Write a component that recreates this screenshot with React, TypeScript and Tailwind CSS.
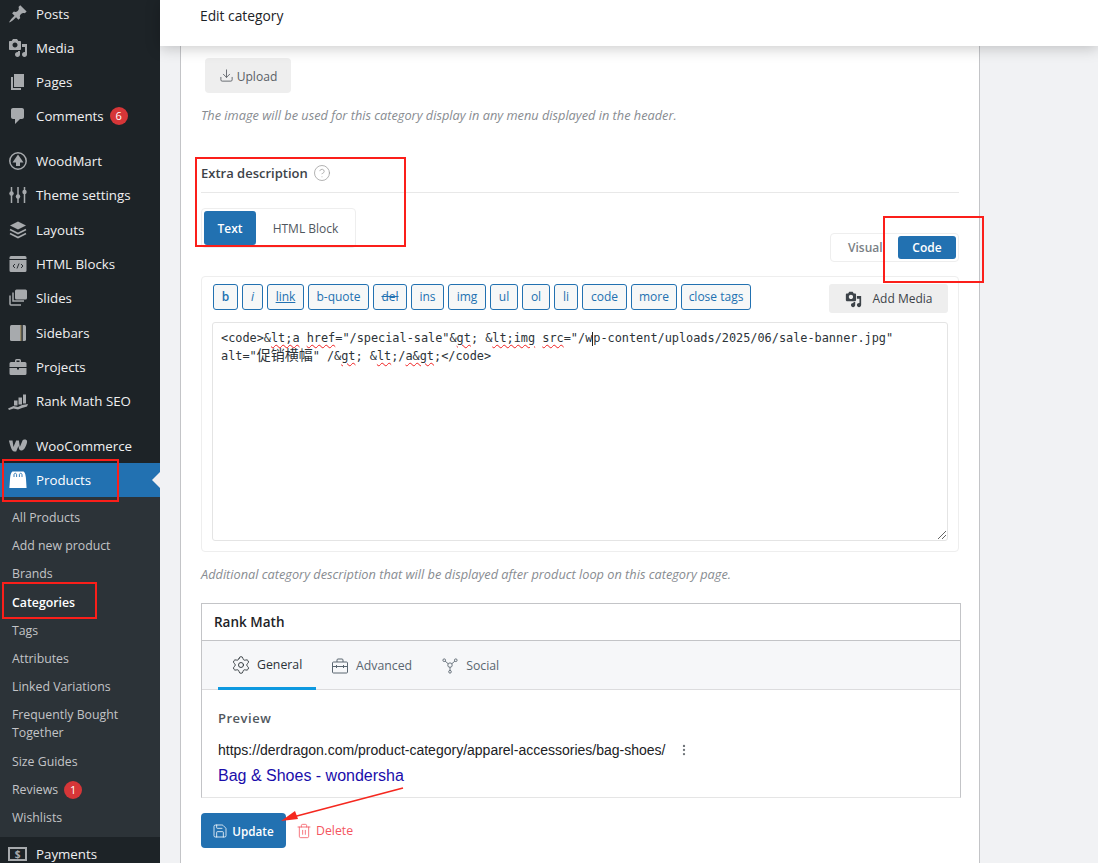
import React from "react";
import {
  CircleHelp,
  Download,
  EllipsisVertical,
  Save,
  Settings,
  Trash2,
} from "lucide-react";

const Dash = ({ d, className = "" }: { d: string; className?: string }) => (
  <svg viewBox="0 0 20 20" className={`h-5 w-5 fill-[#a7aaad] ${className}`}>
    <path d={d} />
  </svg>
);

const PostsIcon = () => (
  <Dash d="M10.44 3.02l1.82-1.82 6.36 6.35-1.83 1.82c-1.05-.68-2.48-.57-3.41.36l-.75.75c-.92.93-1.04 2.35-.35 3.41l-1.83 1.82-2.41-2.41-2.8 2.79c-.42.42-3.38 2.71-3.8 2.29s1.86-3.39 2.28-3.81l2.79-2.79L4.1 9.36l1.83-1.82c1.05.69 2.48.57 3.4-.36l.75-.75c.93-.92 1.05-2.35.36-3.41z" />
);
const mediaPath =
  "M13 11V4c0-.55-.45-1-1-1h-1.67L9 1H5L3.67 3H2c-.55 0-1 .45-1 1v7c0 .55.45 1 1 1h10c.55 0 1-.45 1-1zM7 4.5c1.38 0 2.5 1.12 2.5 2.5S8.38 9.5 7 9.5 4.5 8.38 4.5 7 5.62 4.5 7 4.5zM14 6h5v10.5c0 1.38-1.12 2.5-2.5 2.5S14 17.88 14 16.5s1.12-2.5 2.5-2.5c.17 0 .34.02.5.05V9h-3V6zm-4 8.05V13h2v3.5c0 1.38-1.12 2.5-2.5 2.5S7 17.88 7 16.5 8.12 14 9.5 14c.17 0 .34.02.5.05z";
const MediaIcon = () => <Dash d={mediaPath} />;
const PagesIcon = () => <Dash d="M6 15V2h10v13H6zm-1 1h8v2H3V5h2v11z" />;
const CommentsIcon = () => (
  <Dash d="M5 2h9c1.1 0 2 .9 2 2v7c0 1.1-.9 2-2 2h-2l-5 5v-5H5c-1.1 0-2-.9-2-2V4c0-1.1.9-2 2-2z" />
);
const WoodMartIcon = () => (
  <svg viewBox="0 0 20 20" className="h-5 w-5">
    <circle cx="10" cy="10" r="8.2" fill="none" stroke="#a7aaad" strokeWidth="1.5" />
    <path d="M10 3.5l5.500 8H12v3.500H8v-3.500H4.500z" fill="#a7aaad" />
  </svg>
);
const SlidersIcon = () => (
  <svg viewBox="0 0 20 20" className="h-5 w-5">
    <path d="M3.5 2v16M10 2v16M16.5 2v16" stroke="#a7aaad" strokeWidth="1.5" />
    <circle cx="3.5" cy="8.5" r="2.2" fill="#a7aaad" />
    <circle cx="10" cy="11.5" r="2.2" fill="#a7aaad" />
    <circle cx="16.5" cy="7" r="2.2" fill="#a7aaad" />
  </svg>
);
const LayersIcon = () => (
  <svg viewBox="0 0 20 20" className="h-5 w-5">
    <path d="M10 1.5l8 4-8 4-8-4z" fill="#a7aaad" />
    <path d="M2 9.5l8 4 8-4M2 13.5l8 4 8-4" fill="none" stroke="#a7aaad" strokeWidth="1.6" />
  </svg>
);
const HtmlIcon = () => (
  <svg viewBox="0 0 20 20" className="h-5 w-5">
    <path
      d="M3 2h14a1.5 1.5 0 0 1 1.5 1.5V5h-17V3.5A1.5 1.5 0 0 1 3 2zM1.500 6h17v10.500A1.500 1.500 0 0 1 17 18H3a1.500 1.500 0 0 1-1.500-1.500z"
      fill="#a7aaad"
    />
    <path d="M7 10l-2 2 2 2M13 10l2 2-2 2M11 9.500l-2 5" fill="none" stroke="#1d2327" strokeWidth="0.9" />
  </svg>
);
const SlidesIcon = () => (
  <svg viewBox="0 0 20 20" className="h-5 w-5">
    <rect x="7" y="1.500" width="12" height="10" rx="1.500" fill="#a7aaad" />
    <path d="M5 4.500v8.500h11M2 7.500v8.500a1 1 0 0 0 1 1h10" fill="none" stroke="#a7aaad" strokeWidth="1.500" />
  </svg>
);
const SidebarsIcon = () => (
  <svg viewBox="0 0 20 20" className="h-5 w-5">
    <rect x="2" y="2" width="16" height="16" rx="1.500" fill="#a7aaad" />
    <rect x="12.500" y="2" width="1" height="16" fill="#8a6f2e" />
    <rect x="13.500" y="2" width="1.200" height="16" fill="#1d2327" />
  </svg>
);
const ProjectsIcon = () => (
  <svg viewBox="0 0 20 20" className="h-5 w-5">
    <path
      d="M7 5V3.500A1.500 1.500 0 0 1 8.500 2h3A1.500 1.500 0 0 1 13 3.500V5h4a1.500 1.500 0 0 1 1.500 1.500V10h-17V6.500A1.500 1.500 0 0 1 3 5zm1.500 0h3V3.500h-3zM1.500 11H9v1.500h2V11h7.500v5.500A1.500 1.500 0 0 1 17 18H3a1.500 1.500 0 0 1-1.500-1.500z"
      fill="#a7aaad"
    />
  </svg>
);
const RankIcon = () => (
  <svg viewBox="0 0 20 20" className="h-5 w-5">
    <path
      d="M6 9.500h3.500v5H6zM10.500 6.500H14V13.500h-3.500zM15 3.500h3v9h-3zM0 17.500l5.500-2.500 4.500 1 4-2 6-1-1 2.500-5 1.500-4 1.500-4.500-1-4.500 1.500z"
      fill="#a7aaad"
    />
  </svg>
);
const WooIcon = () => (
  <svg viewBox="0 0 22 14" className="h-[14px] w-[20px]">
    <path
      d="M1 1h4l1 7 3-7h3l1 7 3-7c1-1.500 5-1.500 5 1 0 3-3 10-6 10-2 0-3-1-3.500-5L9 13H6.500C4 13 2 5 1 1z"
      fill="#a7aaad"
    />
  </svg>
);
const StoreIcon = () => (
  <svg viewBox="0 0 20 20" className="h-5 w-5">
    <path d="M5 1.500h10c1.500 0 2.500 2 3 7.500l.6 9H1.400L2 9c.5-5.500 1.500-7.500 3-7.500z" fill="#ffffff" />
    <path d="M6 7V4.800c0-2 2.600-2 2.600 0V7M11.400 7V4.800c0-2 2.600-2 2.600 0V7" fill="none" stroke="#2271b1" strokeWidth="0.9" />
  </svg>
);

const mainMenu = [
  { label: "Posts", icon: <PostsIcon /> },
  { label: "Media", icon: <MediaIcon /> },
  { label: "Pages", icon: <PagesIcon /> },
  { label: "Comments", icon: <CommentsIcon />, badge: "6" },
];
const themeMenu = [
  { label: "WoodMart", icon: <WoodMartIcon /> },
  { label: "Theme settings", icon: <SlidersIcon /> },
  { label: "Layouts", icon: <LayersIcon /> },
  { label: "HTML Blocks", icon: <HtmlIcon /> },
  { label: "Slides", icon: <SlidesIcon /> },
  { label: "Sidebars", icon: <SidebarsIcon /> },
  { label: "Projects", icon: <ProjectsIcon /> },
  { label: "Rank Math SEO", icon: <RankIcon /> },
];
const subMenu = [
  "All Products",
  "Add new product",
  "Brands",
  "Categories",
  "Tags",
  "Attributes",
  "Linked Variations",
  "Frequently Bought Together",
  "Size Guides",
  "Reviews",
  "Wishlists",
];
const quickTags = [
  { t: "b", w: "w-[25px] font-semibold" },
  { t: "i", w: "w-[21px] italic" },
  { t: "link", w: "w-[37px] underline" },
  { t: "b-quote", w: "w-[61px]" },
  { t: "del", w: "w-[34px] line-through" },
  { t: "ins", w: "w-[33px]" },
  { t: "img", w: "w-[38px]" },
  { t: "ul", w: "w-[28px]" },
  { t: "ol", w: "w-[28px]" },
  { t: "li", w: "w-[24px]" },
  { t: "code", w: "w-[45px]" },
  { t: "more", w: "w-[46px]" },
  { t: "close tags", w: "w-[70px]" },
];

const Badge = ({ n }: { n: string }) => (
  <span className="ml-[6px] flex h-[18px] w-[18px] items-center justify-center rounded-full bg-[#d63638] text-[11px] text-white">
    {n}
  </span>
);

const MenuItem = ({
  label,
  icon,
  badge,
  rowClass,
}: {
  label: string;
  icon: React.ReactNode;
  badge?: string;
  rowClass: string;
}) => (
  <div className={`flex items-center text-[#f0f0f1] ${rowClass}`}>
    <div className="flex w-[36px] justify-center pr-[1px]">{icon}</div>
    <span className="pt-[2px]">{label}</span>
    {badge && <Badge n={badge} />}
  </div>
);

const Sidebar = () => (
  <aside className="flex h-full w-[160px] shrink-0 flex-col overflow-hidden bg-[#1d2327] text-[13.3px]">
    <div className="-mt-[3px] shrink-0">
      {mainMenu.map((m) => (
        <MenuItem key={m.label} rowClass="h-[34px]" {...m} />
      ))}
    </div>
    <div className="mt-[11px] shrink-0">
      {themeMenu.map((m) => (
        <MenuItem key={m.label} rowClass="h-[34.3px]" {...m} />
      ))}
    </div>
    <div className="mt-[10.6px] flex h-[34px] shrink-0 items-center text-[#f0f0f1]">
      <div className="flex w-[36px] justify-center pr-[1px]">
        <WooIcon />
      </div>
      <span className="pt-[2px]">WooCommerce</span>
    </div>
    <div className="relative flex h-[34px] shrink-0 items-center bg-[#2271b1] text-white">
      <div className="flex w-[36px] justify-center pr-[1px]">
        <StoreIcon />
      </div>
      <span className="pt-[2px]">Products</span>
      <span className="absolute right-0 top-[9px] h-0 w-0 border-y-[8px] border-r-[8px] border-y-transparent border-r-[#f0f0f1]" />
    </div>
    <div className="shrink-0 bg-[#2c3338] pb-[5px] pt-[7px] text-[12.3px] leading-[18px] text-[#c3c4c7]">
      {subMenu.map((s) => (
        <div key={s} className={`flex items-center px-3 py-[5.1px] ${s === "Categories" ? "font-semibold text-white" : ""}`}>
          <span>{s}</span>
          {s === "Reviews" && <Badge n="1" />}
        </div>
      ))}
    </div>
    <div className="flex h-[34px] shrink-0 items-center text-[#f0f0f1]">
      <div className="flex w-[36px] justify-center pr-[1px]">
        <span className="flex h-[14px] w-[19px] items-center justify-center border-2 border-[#a7aaad] text-[10px] font-bold text-[#a7aaad]">
          $
        </span>
      </div>
      <span className="pt-[2px]">Payments</span>
    </div>
  </aside>
);

const Squiggle = ({ children }: { children: React.ReactNode }) => (
  <span className="underline decoration-[#f02020] decoration-wavy decoration-1 underline-offset-2">{children}</span>
);

const Editor = () => (
  <div className="mt-[14px] h-[276px] rounded border border-[#eeeeee] px-[10px] pt-[7px]">
    <div className="flex items-start">
      <div className="flex gap-[4px] pl-[1px]">
        {quickTags.map(({ t, w }) => (
          <button
            key={t}
            className={`h-[26px] rounded-[3px] border border-[#2271b1] bg-[#f6f7f7] text-[12px] text-[#2271b1] ${w}`}
          >
            {t}
          </button>
        ))}
      </div>
      <button className="ml-auto flex h-[29px] w-[119px] items-center justify-center gap-[11px] rounded-[3px] bg-[#eeeeee] pt-[1px] text-[12px] font-medium text-[#3d4349]">
        <svg viewBox="0 0 20 20" className="h-[17px] w-[17px] fill-[#3d4349]">
          <path d={mediaPath} />
        </svg>
        Add Media
      </button>
    </div>
    <div className="relative mt-[9px] h-[219px] rounded-[3px] border border-[#e4e4e4] px-2 py-[6px] font-['DejaVu_Sans_Mono','Noto_Sans_CJK_SC',monospace] text-[11.9px] leading-[18px] tracking-[-0.02px] text-[#2c3338]">
      <div className="whitespace-pre">
        {"<code>&"}
        <Squiggle>lt;a</Squiggle> <Squiggle>href</Squiggle>
        {'="/special-sale"&'}
        <Squiggle>gt</Squiggle>
        {"; &"}
        <Squiggle>lt;img</Squiggle> <Squiggle>src</Squiggle>
        {'="/w'}
        <span className="inline-block h-[14px] w-0 border-l border-[#222] align-middle" />
        {'p-content/uploads/2025/06/sale-banner.jpg"'}
      </div>
      <div className="-mt-px whitespace-pre">
        {'alt="'}
        <span className="text-[14px] leading-[18px]">促销横幅</span>
        {'" /&'}
        <Squiggle>gt</Squiggle>
        {"; &"}
        <Squiggle>lt</Squiggle>
        {";/"}
        <Squiggle>a&amp;gt</Squiggle>
        {";</code>"}
      </div>
      <svg viewBox="0 0 8 8" className="absolute bottom-[1px] right-[1px] h-2 w-2">
        <path d="M0 8L8 0M4 8L8 4" stroke="#666" strokeWidth="1" />
      </svg>
    </div>
  </div>
);

const ToolboxIcon = () => (
  <svg viewBox="0 0 16 16" className="h-4 w-4 fill-none stroke-[#5a6670] stroke-1">
    <rect x="0.500" y="4" width="15" height="11" rx="1" />
    <path d="M5 4V2a1 1 0 0 1 1-1h4a1 1 0 0 1 1 1v2M0.500 8.500h4M11.500 8.500h4M4.500 7v3M11.500 7v3M4.500 8.500h7" />
  </svg>
);

const SocialIcon = () => (
  <svg viewBox="0 0 18 18" className="h-4 w-4 fill-none stroke-[#5a6670] stroke-1">
    <circle cx="2.500" cy="2.500" r="1.500" />
    <circle cx="15.500" cy="2.500" r="1.500" />
    <circle cx="9" cy="15.500" r="1.500" />
    <circle cx="9" cy="8" r="2.500" />
    <path d="M3.500 3.500L7 6.500M14.500 3.500L11 6.500M9 10.500V14" />
  </svg>
);

const RankMath = () => (
  <div className="-mr-[2px] mt-[19px] h-[195px] border-x border-t border-b border-x-[#c3c4c7] border-t-[#c3c4c7] border-b-[#e5e5e5]">
    <div className="flex h-[37px] items-center border-b border-[#c3c4c7] pl-3 text-[13.5px] font-semibold text-[#1d2327]">
      Rank Math
    </div>
    <div className="flex h-[49px] items-stretch border-b border-[#dcdcde] bg-[#f6f7f9] pl-4 pt-[2px] text-[12.3px] text-[#5a6670]">
      <div className="-mb-px flex w-[98px] items-center gap-[6px] border-b-[3px] border-[#0d99e0] pl-[13px] text-[#2c3338]">
        <Settings className="h-[20px] w-[20px]" strokeWidth={1.1} />
        General
      </div>
      <div className="flex items-center gap-[8px] px-[15px] pl-[16px]">
        <ToolboxIcon />
        Advanced
      </div>
      <div className="flex items-center gap-[8px] px-[15px]">
        <SocialIcon />
        Social
      </div>
    </div>
    <div className="px-4 pt-[19px]">
      <div className="text-[13px] font-semibold tracking-[0.5px] text-[#50575e]">Preview</div>
      <div className="mt-[11px] flex items-center font-['Liberation_Sans',sans-serif] text-[14px] leading-[20px] text-[#202124]">
        <span>https://derdragon.com/product-category/apparel-accessories/bag-shoes/</span>
        <EllipsisVertical className="ml-[12px] h-[14px] w-[14px] text-[#70757a]" />
      </div>
      <div className="mt-[6px] font-['Liberation_Sans',sans-serif] text-[16px] leading-[20px] text-[#1a0dab]">
        Bag &amp; Shoes - wondersha
      </div>
    </div>
  </div>
);

export default function App() {
  return (
    <div className="relative flex h-[863px] w-[1098px] overflow-hidden bg-[#f1f2f4] font-['Open_Sans','Noto_Sans_CJK_SC',sans-serif]">
      <Sidebar />
      <main className="flex min-w-0 flex-1 flex-col">
        <header className="relative z-10 flex h-[46px] shrink-0 items-center bg-white pb-[14px] pl-[40px] text-[13.8px] font-medium text-[#1d2327] shadow-[0_2px_14px_rgba(0,0,0,0.22)]">
          Edit category
        </header>
        <section className="ml-[20px] w-[800px] flex-1 border-x border-[#c3c4c7] bg-white pl-[20px] pr-[20px] pt-3">
          <button className="ml-[4px] flex h-[35px] w-[86px] items-center justify-center gap-[3px] rounded bg-[#eeeeee] pt-[3px] text-[12.1px] font-medium text-[#5a5f66]">
            <Download className="-mt-[3px] h-[15px] w-[15px]" strokeWidth={1.4} />
            Upload
          </button>
          <p className="mt-[12px] text-[12.75px] italic leading-5 text-[#888c91]">
            The image will be used for this category display in any menu displayed in the header.
          </p>
          <div className="mt-[38px] flex items-center border-b border-[#e8e8e8] pb-[9px] text-[13px] font-semibold leading-5 text-[#3d4349]">
            Extra description
            <CircleHelp className="ml-[5px] h-[18px] w-[18px] text-[#9a9a9a]" strokeWidth={1} />
          </div>
          <div className="mt-[15px] flex h-[40px] w-[155px] rounded border border-[#eeeeee] p-[2px] text-[12px] font-semibold">
            <div className="flex w-[52px] items-center justify-center rounded-[3px] bg-[#2271b1] pt-[1px] text-white">Text</div>
            <div className="flex flex-1 items-center justify-center pl-[2px] pt-[1px] font-medium text-[#50575e]">HTML Block</div>
          </div>
          <div className="-mt-[15px] flex justify-end">
            <div className="flex h-[29px] w-[129px] items-center justify-between rounded border border-[#eeeeee] p-[2px] text-[12px] font-semibold">
              <span className="pl-[15px] pt-[1px] text-[#7a7f85]">Visual</span>
              <span className="flex h-[23px] w-[58px] items-center justify-center rounded-[3px] bg-[#2271b1] pt-[1px] text-white">Code</span>
            </div>
          </div>
          <Editor />
          <p className="mt-[12px] text-[12.75px] italic leading-5 text-[#888c91]">
            Additional category description that will be displayed after product loop on this category page.
          </p>
          <RankMath />
          <div className="mt-[15px] flex items-center">
            <button className="flex h-[35px] w-[85px] items-center justify-center gap-[4px] rounded bg-[#2271b1] pr-[1px] pt-[2px] text-[11.7px] font-semibold text-white">
              <Save className="-mt-[2px] h-[16px] w-[16px]" strokeWidth={1.2} />
              Update
            </button>
            <button className="ml-[10px] flex items-center gap-[4px] pt-[1px] text-[12.3px] font-medium text-[#f4565f]">
              <Trash2 className="h-[16px] w-[16px]" strokeWidth={1.2} />
              Delete
            </button>
          </div>
        </section>
      </main>

      {/* red marks drawn over the screenshot */}
      <div className="absolute left-[195px] top-[157px] z-20 h-[90px] w-[211px] border-2 border-[#fb1f1a]" />
      <div className="absolute left-[883px] top-[216px] z-20 h-[67px] w-[101px] border-2 border-[#fb1f1a]" />
      <div className="absolute left-[2px] top-[459px] z-20 h-[43px] w-[117px] border-2 border-[#fb1f1a]" />
      <div className="absolute left-[2px] top-[582px] z-20 h-[37px] w-[95px] border-2 border-[#fb1f1a]" />
      <svg className="absolute left-[275px] top-[780px] z-20 h-[50px] w-[135px]" viewBox="0 0 135 50">
        <path d="M128 8L18 37" stroke="#f5281f" strokeWidth="1.600" />
        <path d="M6 41L20 31L23 39z" fill="#f5281f" />
      </svg>
    </div>
  );
}
